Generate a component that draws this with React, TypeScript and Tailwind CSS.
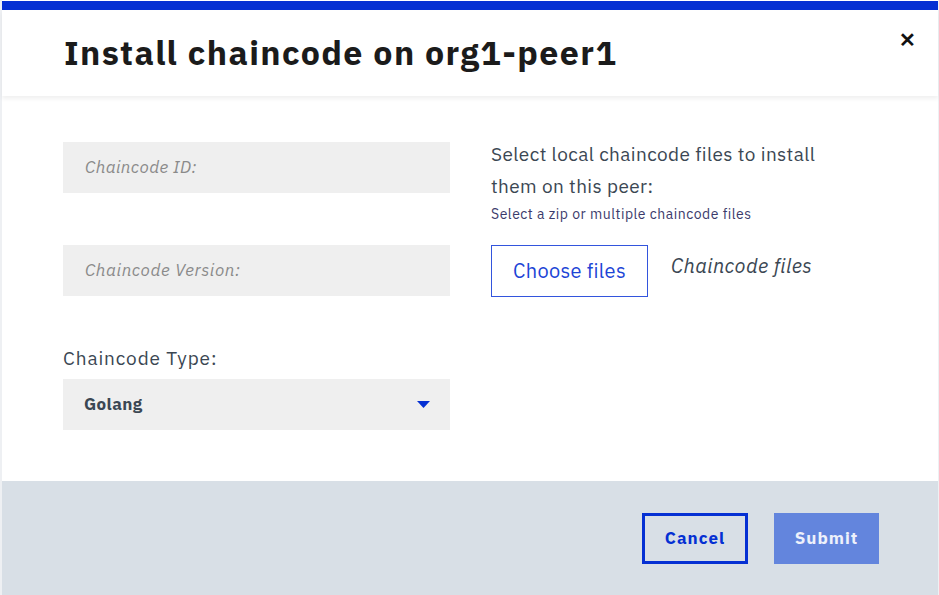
import React from "react";

export default function App() {
  const font = { fontFamily: '"IBM Plex Sans", "Noto Sans", "Open Sans", sans-serif' };
  return (
    <div className="w-[939px] h-[595px] bg-[#eef0f3] pl-[2px] overflow-hidden" style={font}>
      <div className="w-[936px] h-[595px] flex flex-col bg-white">
        <div className="h-[9px] bg-[#0530d3] mt-[1px]" />
        <div className="h-[86px] flex items-start justify-between px-[62px] pt-[19px] shadow-[0_3px_4px_rgba(0,0,0,0.06)] relative z-10">
          <h1 className="text-[34px] font-bold text-[#1b1b1b] tracking-[1.4px] leading-[46px]">
            Install chaincode on org1-peer1
          </h1>
          <button className="absolute right-[22px] top-[20px] text-[#111] text-[20px] font-bold leading-none">
            ✕
          </button>
        </div>
        <div className="flex-1 flex pl-[61px] pt-[46px]">
          <div className="w-[387px] flex flex-col">
            <div className="h-[51px] bg-[#efefef] flex items-center px-[22px] text-[17px] tracking-[0.4px] italic text-[#8a8a8a]">
              Chaincode ID:
            </div>
            <div className="h-[51px] mt-[52px] bg-[#efefef] flex items-center px-[22px] text-[17px] tracking-[0.6px] italic text-[#8a8a8a]">
              Chaincode Version:
            </div>
            <div className="mt-[48px] text-[19px] tracking-[0.9px] text-[#3b4753] leading-[28px]">Chaincode Type:</div>
            <div className="h-[51px] mt-[7px] bg-[#efefef] flex items-center justify-between pl-[21px] pr-[20px]">
              <span className="text-[17px] tracking-[0.4px] font-bold text-[#3b4753]">Golang</span>
              <svg width="13" height="8" viewBox="0 0 13 8">
                <path d="M0 0 L13 0 L6.5 7 Z" fill="#0530d3" />
              </svg>
            </div>
          </div>
          <div className="ml-[41px] flex flex-col">
            <div className="text-[19px] tracking-[0.4px] leading-[32px] text-[#3b4753] w-[345px] -mt-[4px]">
              Select local chaincode files to install them on this peer:
            </div>
            <div className="text-[14px] tracking-[0.5px] text-[#3b3b6b] leading-[20px] mt-[2px]">
              Select a zip or multiple chaincode files
            </div>
            <div className="flex items-start mt-[21px]">
              <button className="w-[157px] h-[52px] border border-[#3355dd] text-[#1d45d6] text-[20px] tracking-[0.3px] flex items-center justify-center">
                Choose files
              </button>
              <span className="ml-[23px] mt-[6px] text-[20px] tracking-[0.4px] italic text-[#3b4753]">Chaincode files</span>
            </div>
          </div>
        </div>
        <div className="h-[114px] bg-[#d8dfe6] flex items-start justify-end pr-[59px] pt-[32px] gap-[26px]">
          <button className="w-[106px] h-[51px] border-[3px] border-[#0530d3] text-[#0530d3] text-[17px] font-bold tracking-[1px]">
            Cancel
          </button>
          <button className="w-[105px] h-[51px] bg-[#6385dd] text-[#eef1fb] text-[17px] font-bold tracking-[1px]">
            Submit
          </button>
        </div>
      </div>
    </div>
  );
}
